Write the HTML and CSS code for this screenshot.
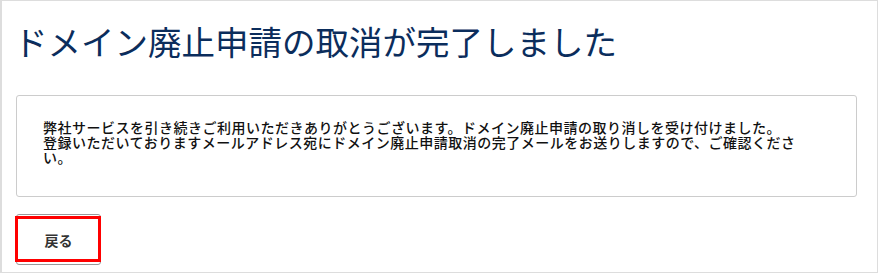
FILE: index.html
```html
<!DOCTYPE html>
<html lang="ja">
<head>
    <meta charset="UTF-8">
    <meta name="viewport" content="width=device-width, initial-scale=1.0">
    <title>ドメイン廃止申請の取消が完了しました</title>
    <link rel="stylesheet" href="styles.css">
</head>
<body>
    <div class="page">
        <h1 class="page-title">ドメイン廃止申請の取消が完了しました</h1>
        <div class="message-box">
            <p>弊社サービスを引き続きご利用いただきありがとうございます。ドメイン廃止申請の取り消しを受け付けました。<br>登録いただいておりますメールアドレス宛にドメイン廃止申請取消の完了メールをお送りしますので、ご確認ください。</p>
        </div>
        <button class="back-btn" type="button">戻る</button>
    </div>
</body>
</html>
```

FILE: styles.css
```css
body {
    margin: 0;
    background-color: white;
    font-family: "Noto Sans CJK JP", "Noto Sans", sans-serif;
}
.page {
    width: 878px;
    height: 273px;
    box-sizing: border-box;
    border: 1px solid #dddddd;
    border-left-width: 2px;
    padding: 20px 20px 0 14px;
}
.page-title {
    margin: 0 0 0 -2px;
    font-size: 33.5px;
    line-height: 40px;
    font-weight: normal;
    color: #0b2d5c;
}
.message-box {
    width: 841px;
    height: 102px;
    box-sizing: border-box;
    margin-top: 34px;
    padding: 24px 26px 0 26px;
    border: 1px solid #cccccc;
    border-radius: 3px;
}
.message-box p {
    margin: 0;
    width: 762px;
    font-size: 14px;
    line-height: 15px;
    letter-spacing: 0.5px;
    font-weight: 500;
    color: #111111;
}
.back-btn {
    position: relative;
    margin-top: 17px;
    width: 85px;
    height: 51px;
    border: 1px solid #999999;
    border-radius: 3px;
    background-color: white;
    font-family: "Noto Sans CJK JP", sans-serif;
    font-size: 14px;
    font-weight: bold;
    color: #333333;
    cursor: pointer;
}
.back-btn::after {
    content: "";
    position: absolute;
    top: 1px;
    bottom: 2px;
    left: -2px;
    right: -1px;
    border: 3px solid #ff0000;
}
```
